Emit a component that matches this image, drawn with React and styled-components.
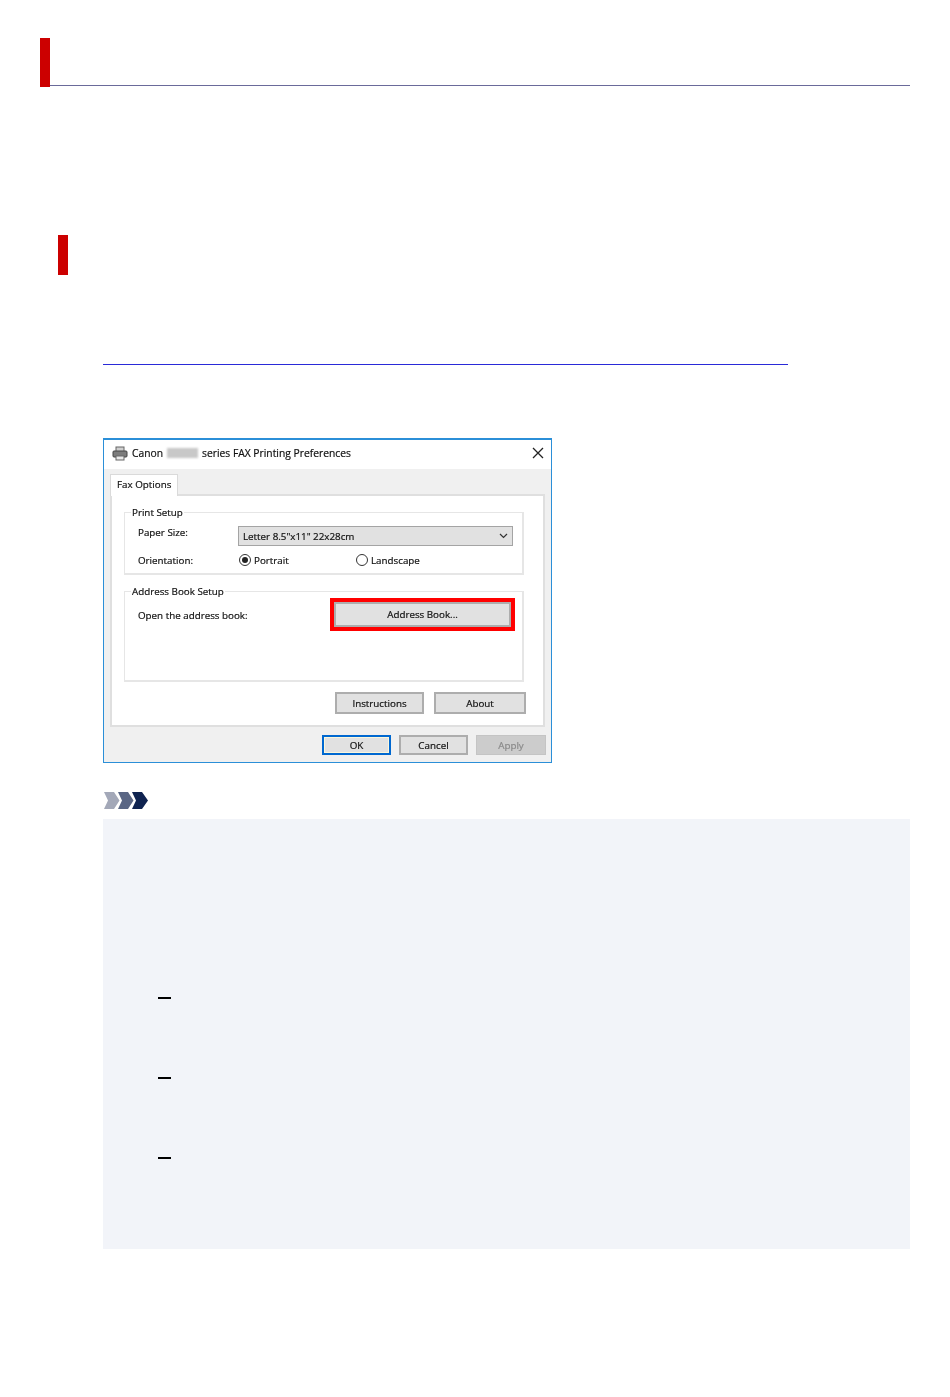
import React from 'react'
import styled, { createGlobalStyle } from 'styled-components'

const GlobalStyle = createGlobalStyle`
    html, body {
        margin: 0;
        padding: 0;
        background: #fff;
    }
`

const Page = styled.div`
    width: 950px;
    height: 1397px;
    padding: 38px 40px 0;
    box-sizing: border-box;
    overflow: hidden;
`

const Heading = styled.div`
    display: flex;
    height: 49px;
`

const HeadingBar = styled.div`
    width: 10px;
    background: #cc0000;
`

const HeadingRule = styled.div`
    flex: 1;
    height: 48px;
    box-sizing: border-box;
    border-bottom: 1px solid #6a6a9a;
`

const SubBar = styled.div`
    width: 10px;
    height: 40px;
    margin: 148px 0 0 18px;
    background: #cc0000;
`

const Content = styled.div`
    margin-left: 63px;
`

const BlankLink = styled.a`
    display: block;
    width: 685px;
    height: 1px;
    margin-top: 89px;
    background: #2a2ad8;
`

const Dialog = styled.div`
    width: 449px;
    height: 325px;
    margin-top: 73px;
    box-sizing: border-box;
    display: flex;
    flex-direction: column;
    border: 1px solid #2b8fd8;
    border-top-width: 2px;
    background: #f0f0f0;
    font-family: "Open Sans", "Liberation Sans", sans-serif;
    font-size: 9.8px;
    color: #111;
    -webkit-text-stroke: 0.2px #111;
    filter: blur(0.4px);
`

const TitleBar = styled.div`
    height: 29px;
    flex: none;
    box-sizing: border-box;
    display: flex;
    align-items: center;
    gap: 4px;
    padding: 0 7px 3px 8px;
    background: #fff;
    font-size: 10.3px;
`

const Censored = styled.span`
    width: 31px;
    height: 10px;
    background: #c8c8c8;
    filter: blur(1px);
`

const CloseIcon = styled.svg`
    margin-left: auto;
`

const Body = styled.div`
    flex: 1;
    padding: 5px 6px 0;
    display: flex;
    flex-direction: column;
`

const TabStrip = styled.div`
    display: flex;
    height: 20px;
    position: relative;
    z-index: 1;
`

const Tab = styled.div`
    width: 68px;
    height: 22px;
    box-sizing: border-box;
    padding-left: 6px;
    line-height: 19px;
    background: #fff;
    border: 1px solid #dadada;
    border-bottom: none;
`

const TabPanel = styled.div`
    width: 435px;
    height: 233px;
    box-sizing: border-box;
    padding: 10px 0 0 12px;
    background: #fff;
    border: 2px solid #dfdfdf;
`

const Group = styled.fieldset`
    width: 400px;
    height: ${(p) => p.$height}px;
    margin: 0 0 ${(p) => p.$gap || 0}px;
    padding: 0;
    box-sizing: border-box;
    border: 2px solid #e6e6e6;
    border-width: 1px 2px 2px 1px;
`

const GroupTitle = styled.legend`
    margin-left: 6px;
    padding: 0 1px;
    line-height: 13px;
`

const Row = styled.div`
    display: grid;
    grid-template-columns: 100px 117px 1fr;
    align-items: center;
    height: ${(p) => p.$height}px;
    padding-left: 13px;
`

const Select = styled.div`
    grid-column: 2 / 4;
    align-self: end;
    width: 275px;
    height: 20px;
    box-sizing: border-box;
    display: flex;
    align-items: center;
    justify-content: space-between;
    padding: 0 4px;
    background: #e1e1e1;
    border: 1px solid #a4a4a4;
`

const Radio = styled.label`
    display: flex;
    align-items: center;
    gap: 3px;
`

const RadioMark = styled.span`
    width: 12px;
    height: 12px;
    margin-left: 1px;
    box-sizing: border-box;
    display: flex;
    align-items: center;
    justify-content: center;
    border: 1px solid #333;
    border-radius: 50%;
    &::after {
        content: '';
        display: ${(p) => (p.$checked ? 'block' : 'none')};
        width: 6px;
        height: 6px;
        border-radius: 50%;
        background: #222;
    }
`

const BookRow = styled.div`
    display: flex;
    justify-content: space-between;
    padding: 0 7px 0 13px;
    height: 40px;
`

const BookLabel = styled.span`
    margin-top: 11px;
`

const Highlight = styled.div`
    width: 185px;
    height: 33px;
    box-sizing: border-box;
    border: 4px solid #ff0000;
`

const Button = styled.div`
    width: ${(p) => p.$width || 100}px;
    height: ${(p) => p.$height || 22}px;
    box-sizing: border-box;
    display: flex;
    align-items: center;
    justify-content: center;
    background: ${(p) => (p.$disabled ? '#cccccc' : '#e1e1e1')};
    color: ${(p) => (p.$disabled ? '#8a8a8a' : '#111')};
    -webkit-text-stroke-color: ${(p) => (p.$disabled ? '#8a8a8a' : '#111')};
    border: ${(p) => (p.$primary ? '2px solid #0068d0' : p.$disabled ? '1px solid #c4c4c4' : '2px solid #adadad')};
    ${(p) => p.$primary && 'box-shadow: inset 0 0 0 1px #fbf7dc;'}
`

const PanelButtons = styled.div`
    display: flex;
    gap: 10px;
    width: 402px;
    justify-content: flex-end;
    margin-top: 10px;
`

const Footer = styled.div`
    display: flex;
    justify-content: flex-end;
    flex: none;
    gap: 8px;
    width: 436px;
    margin-top: 8px;
`

const NoteIcon = styled.svg`
    display: block;
    margin: 29px 0 0 1px;
    filter: blur(0.4px);
`

const NoteBox = styled.div`
    width: 807px;
    height: 430px;
    margin-top: 10px;
    box-sizing: border-box;
    padding-top: 178px;
    background: #f2f4f9;
    display: flex;
    flex-direction: column;
    gap: 78px;
`

const Dash = styled.div`
    width: 13px;
    height: 2px;
    margin-left: 55px;
    background: #000;
`

const Printer = () => (
    <svg width="16" height="15" viewBox="0 0 16 15">
        <rect x="4" y="1" width="8" height="5" fill="#cfcfcf" stroke="#666" />
        <rect x="1" y="5" width="14" height="6" rx="1" fill="#7c7c7c" stroke="#444" />
        <rect x="4" y="10" width="8" height="4" fill="#e8e8e8" stroke="#666" />
    </svg>
)

const App = () => {
    return (
        <Page>
            <GlobalStyle />
            <Heading>
                <HeadingBar />
                <HeadingRule />
            </Heading>
            <SubBar />
            <Content>
                <BlankLink />
                <Dialog>
                    <TitleBar>
                        <Printer />
                        <span>Canon</span>
                        <Censored />
                        <span>series FAX Printing Preferences</span>
                        <CloseIcon width="12" height="12" viewBox="0 0 12 12">
                            <path d="M1 1 L11 11 M11 1 L1 11" stroke="#222" strokeWidth="1.3" />
                        </CloseIcon>
                    </TitleBar>
                    <Body>
                        <TabStrip>
                            <Tab>Fax Options</Tab>
                        </TabStrip>
                        <TabPanel>
                            <Group $height={69} $gap={10}>
                                <GroupTitle>Print Setup</GroupTitle>
                                <Row $height={27}>
                                    <span>Paper Size:</span>
                                    <Select>
                                        <span>Letter 8.5"x11" 22x28cm</span>
                                        <svg width="9" height="6" viewBox="0 0 9 6">
                                            <path d="M1 1 L4.5 4.5 L8 1" fill="none" stroke="#333" strokeWidth="1.2" />
                                        </svg>
                                    </Select>
                                </Row>
                                <Row $height={28}>
                                    <span>Orientation:</span>
                                    <Radio>
                                        <RadioMark $checked />
                                        Portrait
                                    </Radio>
                                    <Radio>
                                        <RadioMark />
                                        Landscape
                                    </Radio>
                                </Row>
                            </Group>
                            <Group $height={97}>
                                <GroupTitle>Address Book Setup</GroupTitle>
                                <BookRow>
                                    <BookLabel>Open the address book:</BookLabel>
                                    <Highlight>
                                        <Button $width={177} $height={25}>Address Book...</Button>
                                    </Highlight>
                                </BookRow>
                            </Group>
                            <PanelButtons>
                                <Button $width={89}>Instructions</Button>
                                <Button $width={92}>About</Button>
                            </PanelButtons>
                        </TabPanel>
                        <Footer>
                            <Button $primary $width={69} $height={20}>OK</Button>
                            <Button $width={69} $height={20}>Cancel</Button>
                            <Button $disabled $width={70} $height={20}>Apply</Button>
                        </Footer>
                    </Body>
                </Dialog>
                <NoteIcon width="44" height="17" viewBox="0 0 44 17">
                    <path d="M0 0 H10 L15.5 8.5 L10 17 H0 L4 8.5 Z" fill="#a3a8b8" />
                    <path d="M14 0 H24 L29.5 8.5 L24 17 H14 L18 8.5 Z" fill="#5a6684" />
                    <path d="M28 0 H38 L44 8.5 L38 17 H28 L32 8.5 Z" fill="#0f2350" />
                </NoteIcon>
                <NoteBox>
                    <Dash />
                    <Dash />
                    <Dash />
                </NoteBox>
            </Content>
        </Page>
    )
}

export default App
